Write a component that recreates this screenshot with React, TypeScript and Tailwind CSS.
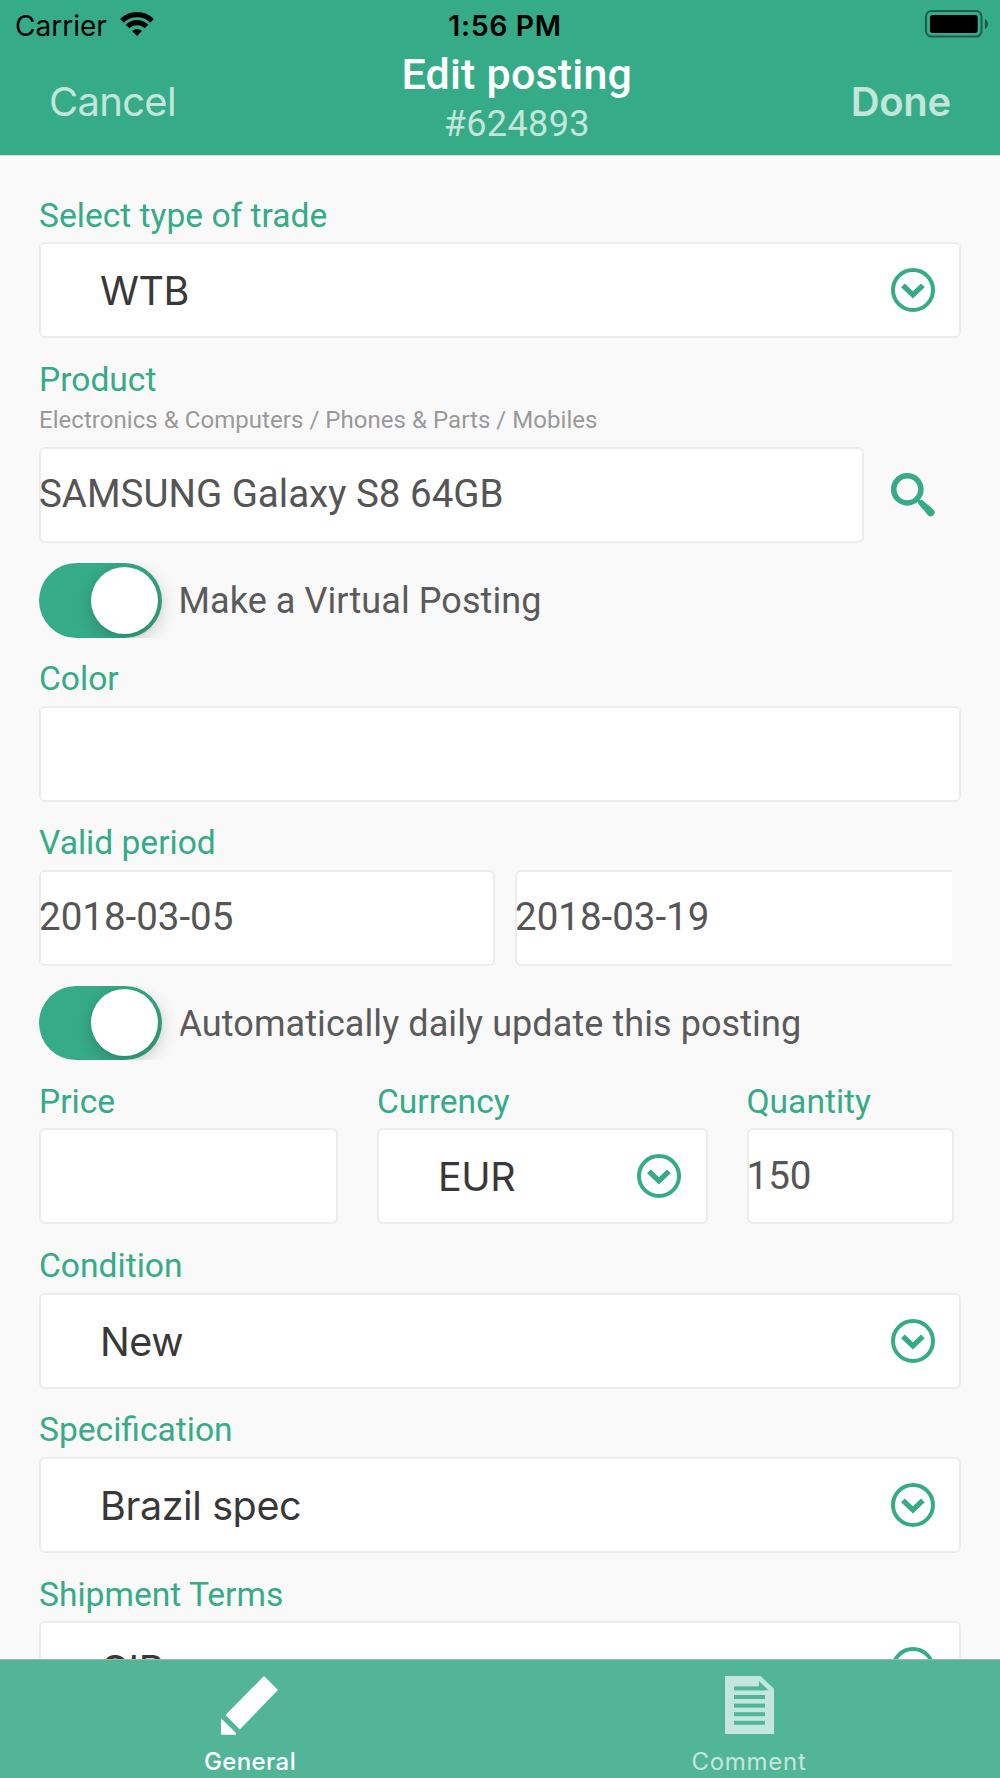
import React from 'react';

function WifiIcon() {
  return (
    <svg width="34" height="24" viewBox="0 0 34 24" fill="none" stroke="#000" strokeWidth="5.2">
      <path d="M1.94 8.94A21.3 21.3 0 0 1 32.06 8.94" />
      <path d="M7.53 14.53A13.4 13.4 0 0 1 26.47 14.53" />
      <path d="M17 24L12.05 19.05A7 7 0 0 1 21.95 19.05Z" fill="#000" stroke="none" />
    </svg>
  );
}

function BatteryIcon() {
  return (
    <svg width="64" height="28" viewBox="0 0 64 28">
      <rect x="1" y="1" width="55.5" height="25.6" rx="5.5" fill="none" stroke="#000" strokeOpacity="0.45" strokeWidth="2" />
      <rect x="5" y="4.9" width="47.7" height="18" rx="2.6" fill="#000" />
      <path d="M60 9C63.8 10.6 63.8 17.4 60 19Z" fill="#000" fillOpacity="0.5" />
    </svg>
  );
}

function ChevronCircle() {
  return (
    <svg className="shrink-0" width="44" height="44" viewBox="0 0 44 44" fill="none" stroke="#36ab87">
      <circle cx="22" cy="22" r="20" strokeWidth="4" />
      <path d="M11.9 17.4L21.9 26.9L31.9 17.4" strokeWidth="5.4" />
    </svg>
  );
}

function SearchIcon() {
  return (
    <svg width="44" height="44" viewBox="0 0 44 44">
      <circle cx="16.3" cy="16.3" r="13.6" fill="none" stroke="#36ab87" strokeWidth="5.5" />
      <path d="M26.8 29.4L29.9 26.6Q31.6 27.2 33 28.5L42.6 36.8A3.9 3.9 0 0 1 37.2 42.4L28.6 32.4Q27.4 31 26.8 29.4Z" fill="#36ab87" />
      <path d="M24 24L29 29" stroke="#36ab87" strokeWidth="2.6" />
    </svg>
  );
}

function PencilIcon() {
  return (
    <svg width="58" height="59" viewBox="0 0 58 59" fill="#fff">
      <path d="M43 0L57 14L18.8 53.4L4.5 39Z" />
      <path d="M0 42.3L15 57V58.8H0Z" />
    </svg>
  );
}

function DocumentIcon() {
  return (
    <svg width="49" height="59" viewBox="0 0 49 59">
      <path d="M0 0H35.5L49 12.8V58H0Z" fill="#c3e7dc" />
      <path d="M34 5L43.5 14.3H34Z" fill="#53b598" />
      <g fill="#53b598">
        <rect x="9" y="10.4" width="31" height="4" />
        <rect x="9" y="19" width="31" height="4" />
        <rect x="9" y="27.6" width="31" height="4" />
        <rect x="9" y="36.2" width="31" height="4" />
        <rect x="9" y="44.8" width="31" height="4" />
      </g>
    </svg>
  );
}

function Label({ children }: { children: React.ReactNode }) {
  return (
    <div className="mb-[6.8px] pt-[21.5px] text-[33.6px] leading-[40px] whitespace-nowrap text-[#36ab87]">
      {children}
    </div>
  );
}

function TextBox({ value = '', className = '' }: { value?: string; className?: string }) {
  return (
    <div className={`h-24 rounded-[6px] border-2 border-[#ececec] bg-white pt-[22.3px] ${className}`}>
      <div className="-ml-0.5 text-[38.5px] leading-[45px] whitespace-nowrap text-[#555]">{value}</div>
    </div>
  );
}

function Picker({ value }: { value: string }) {
  return (
    <div className="flex h-24 items-center justify-between rounded-[6px] border-2 border-[#ececec] bg-white pr-[24.5px] pl-[59px]">
      <div className="mt-[23px] h-12 self-start font-['Inter',sans-serif] text-[39.5px] leading-[48px] tracking-[-0.4px] whitespace-nowrap text-[#383838] [clip-path:inset(0_0_3px_0)]">
        {value}
      </div>
      <ChevronCircle />
    </div>
  );
}

function Toggle({ label }: { label: string }) {
  return (
    <div className="mt-[19.5px] flex h-[74.5px] items-center">
      <div className="h-full w-[139.5px] overflow-hidden">
        <div className="flex h-full w-[123px] items-center justify-end rounded-full bg-[#36ab87] pr-1">
          <div className="size-[67px] rounded-full bg-white shadow-[2px_5px_18px_rgba(0,0,0,0.24)]" />
        </div>
      </div>
      <div className="mt-[2px] text-[36px] leading-[42px] tracking-[0.08px] whitespace-nowrap text-[#5a5a5a] [clip-path:inset(0_0_0_2px)]">{label}</div>
    </div>
  );
}

export default function App() {
  return (
    <div className="flex h-[1778px] w-[1000px] flex-col overflow-hidden bg-[#f9f9f9] font-['Roboto',sans-serif]">
      <header className="h-[156px] shrink-0 border-b border-[#dcdcdc] bg-[#36ab87]">
        <div className="grid h-12 grid-cols-[1fr_auto_1fr] items-start pr-[11px] pl-[15px] font-['Inter',sans-serif] text-[28px] leading-[34px] text-black">
          <div className="flex gap-[13px] pt-[9px]">
            <span>Carrier</span>
            <span className="pt-[3px]"><WifiIcon /></span>
          </div>
          <span className="ml-1.5 pt-[9px] text-[28.5px] font-semibold tracking-[0.6px]">1:56 PM</span>
          <div className="flex justify-end pt-[10px]"><BatteryIcon /></div>
        </div>
        <div className="flex justify-between pr-[49px] pl-[49px]">
          <div className="w-[134px] pt-[30px] font-['Inter',sans-serif] text-[40px] leading-[48px] tracking-[-0.7px] text-[#c3e6db]">Cancel</div>
          <div className="pt-px text-center">
            <div className="text-[43px] leading-[50px] font-medium tracking-[0.2px] text-white">Edit posting</div>
            <div className="mt-[3.6px] text-[36px] leading-[42px] tracking-[0.4px] text-[#c3e6db]">#624893</div>
          </div>
          <div className="pt-[30px] font-['Inter',sans-serif] text-[40px] leading-[48px] font-semibold tracking-[-0.25px] text-[#c3e6db]">Done</div>
        </div>
      </header>

      <main className="min-h-0 flex-1 overflow-hidden pt-[18px] pr-[39px] pl-[39px]">
        <Label>Select type of trade</Label>
        <Picker value="WTB" />

        <Label>Product</Label>
        <div className="-mt-px mb-[13px] text-[24px] leading-7 tracking-[0.05px] text-[#999]">
          Electronics &amp; Computers / Phones &amp; Parts / Mobiles
        </div>
        <div className="flex items-center gap-[27px]">
          <TextBox value="SAMSUNG Galaxy S8 64GB" className="w-[825px]" />
          <SearchIcon />
        </div>

        <div className="pt-px">
          <Toggle label="Make a Virtual Posting" />
        </div>

        <Label>Color</Label>
        <TextBox />

        <Label>Valid period</Label>
        <div className="flex w-[913px] gap-5 overflow-hidden">
          <TextBox value="2018-03-05" className="w-[456px] shrink-0" />
          <TextBox value="2018-03-19" className="w-[456px] shrink-0" />
        </div>

        <Toggle label="Automatically daily update this posting" />

        <div className="flex gap-[39px]">
          <div className="w-[299px]">
            <Label>Price</Label>
            <TextBox />
          </div>
          <div className="w-[330.5px]">
            <Label>Currency</Label>
            <Picker value="EUR" />
          </div>
          <div className="w-[207px]">
            <Label>Quantity</Label>
            <TextBox value="150" />
          </div>
        </div>

        <Label>Condition</Label>
        <Picker value="New" />

        <Label>Specification</Label>
        <Picker value="Brazil spec" />

        <Label>Shipment Terms</Label>
        <Picker value="CIP" />
      </main>

      <nav className="grid h-[119px] shrink-0 grid-cols-2 border-t border-[#a4b5af] bg-[#53b598] font-['Inter',sans-serif] text-[24px] leading-7 font-medium tracking-[0.4px]">
        <div className="flex flex-col items-center gap-[13px] pt-4 text-white">
          <PencilIcon />
          <span>General</span>
        </div>
        <div className="flex flex-col items-center gap-[13px] pt-4 pr-[2px] font-normal text-[#c3e7dc]">
          <DocumentIcon />
          <span className="tracking-[0.7px]">Comment</span>
        </div>
      </nav>
    </div>
  );
}
